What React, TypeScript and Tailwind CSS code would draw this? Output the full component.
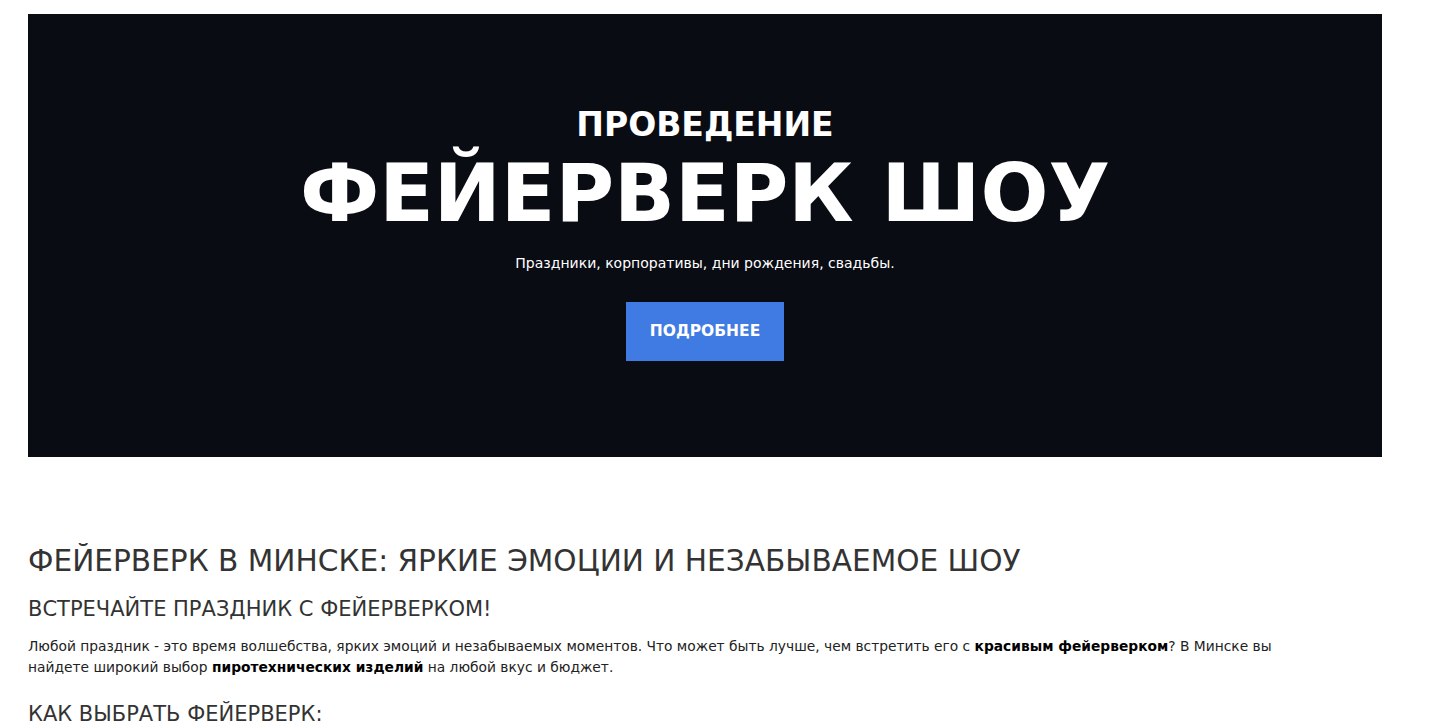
export default function App() {
  return (
    <div className="min-h-screen bg-white pt-[14px] font-['DejaVu_Sans',sans-serif]">
      {/* Hero */}
      <section className="ml-[28px] w-[1354px] h-[443px] bg-[#0a0c14] flex flex-col items-center pt-[91px]">
        <h2 className="text-[33px] leading-[40px] font-bold text-white">ПРОВЕДЕНИЕ</h2>
        <h1 className="mt-[4px] text-[80px] leading-[90px] font-bold text-white">ФЕЙЕРВЕРК ШОУ</h1>
        <p className="mt-[14px] text-[14px] leading-[20px] text-white">Праздники, корпоративы, дни рождения, свадьбы.</p>
        <a className="mt-[29px] w-[158px] h-[59px] bg-[#3f7be3] flex items-center justify-center text-white text-[15.5px] font-bold">
          ПОДРОБНЕЕ
        </a>
      </section>

      {/* Content */}
      <div className="ml-[28px] w-[1280px] pt-[86px] text-[#333]">
        <h2 className="text-[29.6px] leading-[36px] font-normal">ФЕЙЕРВЕРК В МИНСКЕ: ЯРКИЕ ЭМОЦИИ И НЕЗАБЫВАЕМОЕ ШОУ</h2>
        <h3 className="mt-[16px] text-[21px] leading-[28px] font-normal">ВСТРЕЧАЙТЕ ПРАЗДНИК С ФЕЙЕРВЕРКОМ!</h3>
        <p className="mt-[13px] text-[13.8px] leading-[21px] text-[#222]">
          Любой праздник - это время волшебства, ярких эмоций и незабываемых моментов. Что может быть лучше, чем встретить его с <b className="font-bold text-black">красивым фейерверком</b>? В Минске вы найдете широкий выбор <b className="font-bold text-black">пиротехнических изделий</b> на любой вкус и бюджет.
        </p>
        <h3 className="mt-[22px] text-[21px] leading-[28px] font-normal">КАК ВЫБРАТЬ ФЕЙЕРВЕРК:</h3>
      </div>
    </div>
  );
}
